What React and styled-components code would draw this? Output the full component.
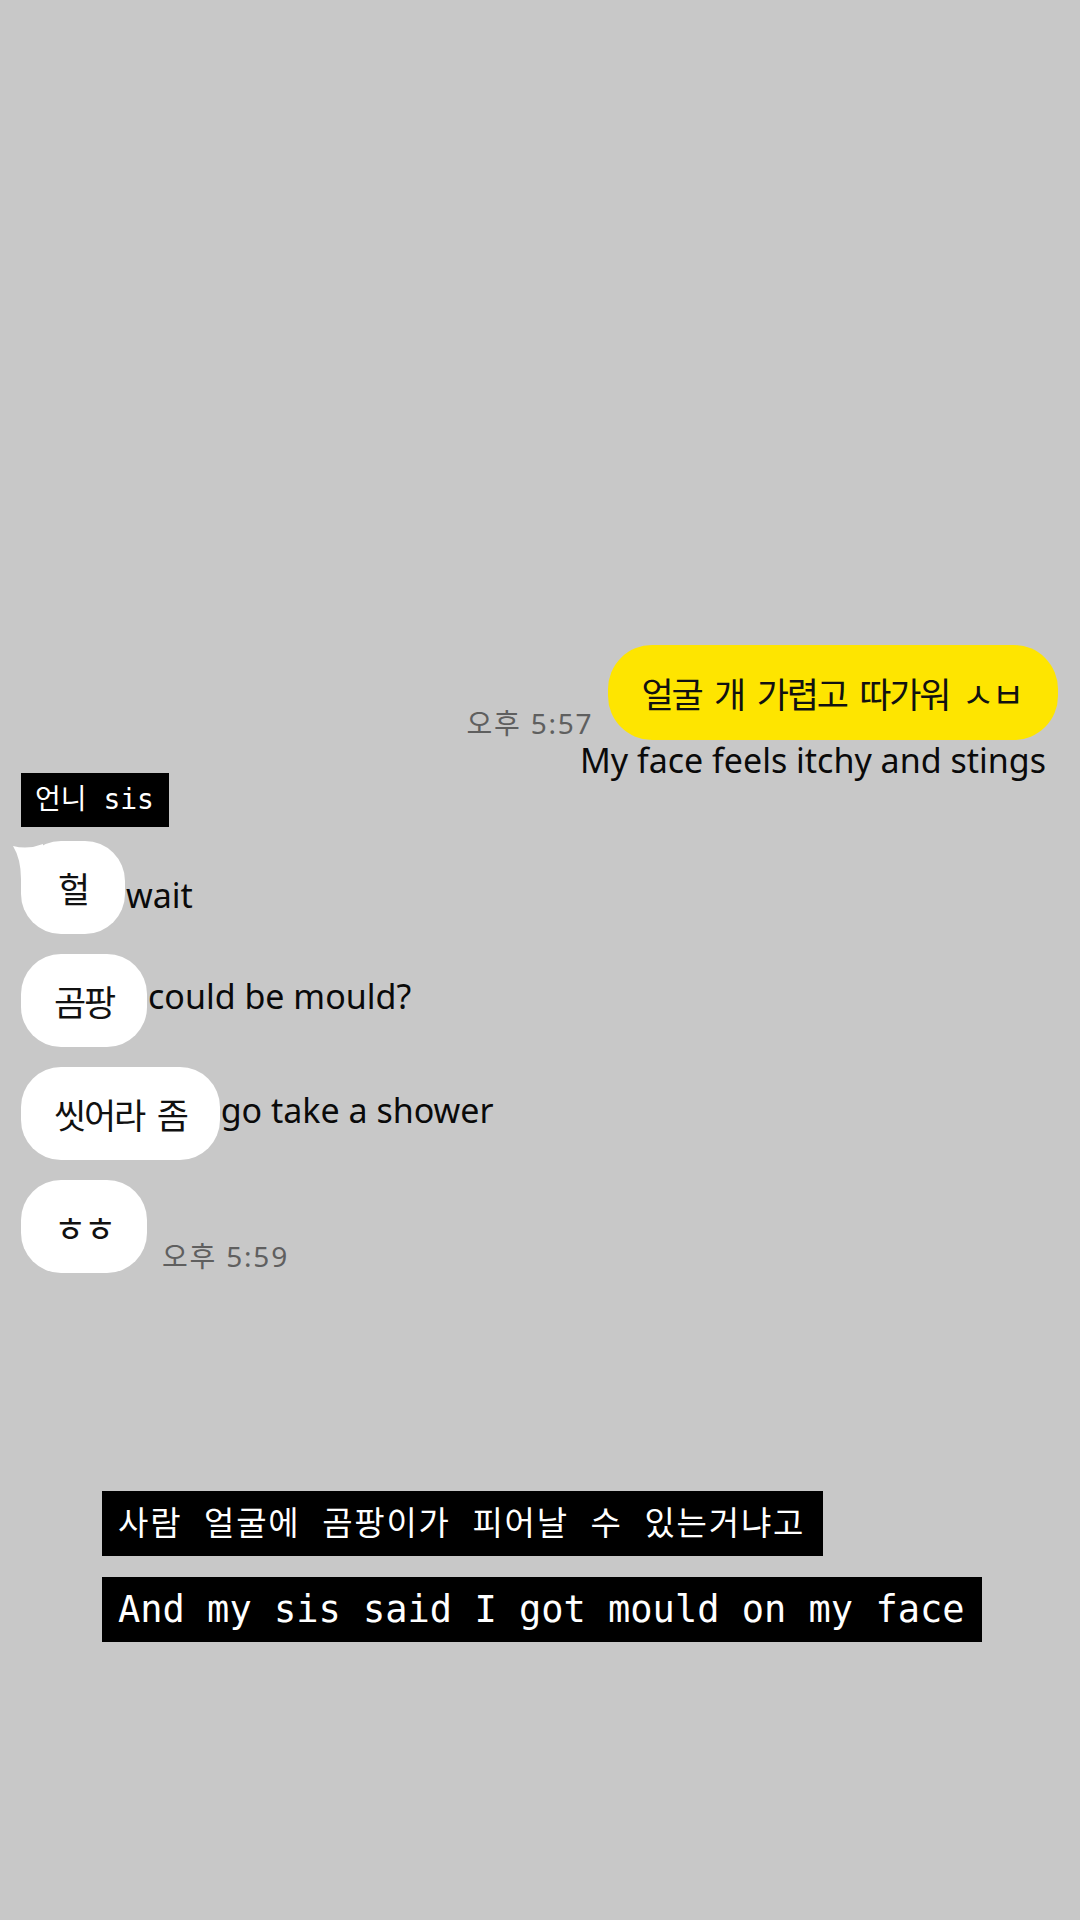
import React from 'react';
import styled, { createGlobalStyle } from 'styled-components';

const GlobalStyle = createGlobalStyle`
  html, body {
    margin: 0;
    padding: 0;
    background: #c8c8c8;
  }
  * { box-sizing: border-box; }
`;

const Page = styled.div`
  width: 1080px;
  min-height: 1920px;
  background: #c8c8c8;
  padding-top: 645px;
  display: flex;
  flex-direction: column;
`;

const Chat = styled.div`
  display: flex;
  flex-direction: column;
  padding: 0 22px 0 21px;
`;

const SentRow = styled.div`
  display: flex;
  justify-content: flex-end;
  align-items: flex-end;
  gap: 15px;
`;

const Time = styled.span`
  font-family: "Noto Sans", "Noto Sans CJK KR", sans-serif;
  font-size: 28px;
  line-height: 28px;
  letter-spacing: 1.8px;
  color: #5f5f5f;
  margin-bottom: 3px;
  white-space: nowrap;
`;

const Bubble = styled.div`
  position: relative;
  display: flex;
  align-items: center;
  justify-content: center;
  height: ${p => (p.$mine ? '95px' : '93px')};
  min-width: 104px;
  padding: ${p => (p.$mine ? '0 36px 0 33px' : '0 33px')};
  border-radius: ${p => (p.$mine ? '44px' : '40px')};
  background: ${p => (p.$mine ? '#fee500' : '#ffffff')};
  color: #111;
  font-family: "Noto Sans CJK KR", sans-serif;
  font-size: 35px;
  letter-spacing: -2.2px;
  word-spacing: 7px;
  white-space: nowrap;
`;

const Tail = styled.svg`
  position: absolute;
  left: -8px;
  top: 0;
  width: 40px;
  height: 42px;
`;

const Sub = styled.div`
  font-family: "Noto Sans", sans-serif;
  font-size: 34px;
  color: #0a0a0a;
  white-space: nowrap;
  line-height: ${p => (p.$right ? '26px' : '40px')};
  text-align: ${p => (p.$right ? 'right' : 'left')};
  margin-top: ${p => p.$top || 0}px;
  margin-left: ${p => (p.$right ? 0 : 1)}px;
  padding-right: ${p => (p.$right ? '12px' : '0')};
`;

const NameTag = styled.div`
  align-self: flex-start;
  height: 54px;
  line-height: 54px;
  padding: 0 15px 0 14px;
  background: #000;
  color: #fff;
  font-family: "DejaVu Sans Mono", "Noto Sans CJK KR", monospace;
  font-size: 28px;
  white-space: nowrap;
`;

const Thread = styled.div`
  display: flex;
  flex-direction: column;
  gap: 20px;
  margin-top: 14px;
`;

const Row = styled.div`
  display: flex;
  align-items: ${p => (p.$end ? 'flex-end' : 'flex-start')};
  gap: ${p => (p.$end ? '15px' : '0')};
`;

const Captions = styled.div`
  display: flex;
  flex-direction: column;
  align-items: flex-start;
  gap: 21px;
  margin-top: 218px;
  padding-left: 102px;
`;

const Caption = styled.div`
  height: 65px;
  line-height: 65px;
  background: #000;
  color: #fff;
  font-family: "DejaVu Sans Mono", "Noto Sans CJK KR", monospace;
  font-size: ${p => (p.$ko ? '33px' : '37px')};
  letter-spacing: ${p => (p.$ko ? '1.8px' : '0')};
  padding: ${p => (p.$ko ? '0 18px 0 16px' : '0 18px 0 16px')};
  white-space: pre;
`;

const received = [
  { ko: '헐', en: 'wait', top: 34, tail: true },
  { ko: '곰팡', en: 'could be mould?', top: 22 },
  { ko: '씻어라 좀', en: 'go take a shower', top: 23 },
];

export default function App() {
  return (
    <>
      <GlobalStyle />
      <Page>
        <Chat>
          <SentRow>
            <Time>오후 5:57</Time>
            <Bubble $mine>얼굴 개 가렵고 따가워 ㅅㅂ</Bubble>
          </SentRow>
          <Sub $right $top={7}>My face feels itchy and stings</Sub>
          <NameTag>언니 sis</NameTag>
          <Thread>
            {received.map(m => (
              <Row key={m.ko}>
                <Bubble>
                  {m.tail && (
                    <Tail viewBox="0 0 40 42">
                      <path d="M0 5 Q15 9 30 3 L30 42 L8 42 L8 38 Q8 18 0 5 Z" fill="#fff" />
                    </Tail>
                  )}
                  {m.ko}
                </Bubble>
                <Sub $top={m.top}>{m.en}</Sub>
              </Row>
            ))}
            <Row $end>
              <Bubble>ㅎㅎ</Bubble>
              <Time>오후 5:59</Time>
            </Row>
          </Thread>
        </Chat>
        <Captions>
          <Caption $ko>사람 얼굴에 곰팡이가 피어날 수 있는거냐고</Caption>
          <Caption>And my sis said I got mould on my face</Caption>
        </Captions>
      </Page>
    </>
  );
}
